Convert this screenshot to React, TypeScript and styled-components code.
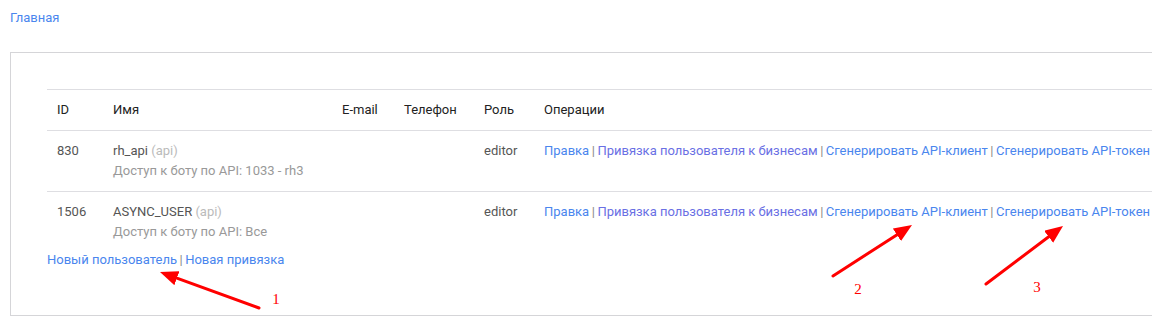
import React from "react";
import styled, { createGlobalStyle } from "styled-components";

const GlobalStyle = createGlobalStyle`
  html, body {
    margin: 0;
    padding: 0;
    overflow: hidden;
    background: #fff;
  }
  body {
    font-family: Roboto, "Liberation Sans", Arial, sans-serif;
    font-size: 13px;
    line-height: 20px;
    color: #333;
  }
`;

const Page = styled.div`
  position: relative;
  padding: 8px 0 0 10px;
  width: 1200px;
  height: 318px;
  box-sizing: border-box;
`;

const Link = styled.a<{ $visited?: boolean }>`
  color: ${(p) => (p.$visited ? "#6a70e4" : "#4a86ee")};
  text-decoration: none;
  cursor: pointer;
`;

const Breadcrumbs = styled.div`
  height: 20px;
  margin-bottom: 24px;
`;

const Panel = styled.div`
  border: 1px solid #d5d5d8;
  padding: 36px 0 45px 36px;
  width: 1180px;
`;

const Table = styled.table`
  border-collapse: collapse;
  width: 1150px;
  border-top: 1px solid #dedee2;
`;

const Th = styled.th<{ $w?: number }>`
  text-align: left;
  font-weight: 400;
  color: #222;
  padding: 10px 10px 10px;
  width: ${(p) => (p.$w ? `${p.$w - 20}px` : "auto")};
  white-space: nowrap;
`;

const Row = styled.tr`
  border-top: 1px solid #dedee2;
`;

const Td = styled.td`
  vertical-align: top;
  padding: 10px 10px 10px;
  color: #555;
  white-space: nowrap;
`;

const Muted = styled.span`
  color: #bbb;
`;

const Note = styled.div`
  color: #999;
`;

const Sep = styled.span`
  color: #888;
  margin: 0 2.5px;
`;

const Footer = styled.div`
  height: 20px;
  margin-top: -2px;
`;

const Overlay = styled.svg`
  position: absolute;
  left: 0;
  top: 0;
  pointer-events: none;
`;

type User = { id: number; name: string; access: string };

const users: User[] = [
  { id: 830, name: "rh_api", access: "1033 - rh3" },
  { id: 1506, name: "ASYNC_USER", access: "Все" },
];

const Operations = () => (
  <>
    <Link>Правка</Link>
    <Sep>|</Sep>
    <Link $visited>Привязка пользователя к бизнесам</Link>
    <Sep>|</Sep>
    <Link>Сгенерировать API-клиент</Link>
    <Sep>|</Sep>
    <Link>Сгенерировать API-токен</Link>
  </>
);

const arrows = [
  { x1: 259, y1: 308, x2: 160, y2: 272, label: "1", lx: 276, ly: 304 },
  { x1: 833, y1: 276, x2: 912, y2: 225, label: "2", lx: 858, ly: 294 },
  { x1: 986, y1: 284, x2: 1063, y2: 226, label: "3", lx: 1037, ly: 292 },
];

const Arrows = () => (
  <Overlay width={1152} height={318}>
    <defs>
      <marker
        id="head"
        markerWidth="6"
        markerHeight="5"
        refX="1"
        refY="2.5"
        orient="auto"
        markerUnits="strokeWidth"
      >
        <path d="M0,0 L6,2.5 L0,5 Z" fill="#f00" />
      </marker>
    </defs>
    {arrows.map((a) => {
      const dx = a.x2 - a.x1;
      const dy = a.y2 - a.y1;
      const len = Math.sqrt(dx * dx + dy * dy);
      const ex = a.x2 - (dx / len) * 15;
      const ey = a.y2 - (dy / len) * 15;
      return (
        <g key={a.label}>
          <line
            x1={a.x1}
            y1={a.y1}
            x2={ex}
            y2={ey}
            stroke="#f00"
            strokeWidth={3}
            strokeLinecap="round"
            markerEnd="url(#head)"
          />
          <text
            x={a.lx}
            y={a.ly}
            fill="#f00"
            fontSize={15}
            fontFamily='"Liberation Serif", serif'
            textAnchor="middle"
          >
            {a.label}
          </text>
        </g>
      );
    })}
  </Overlay>
);

const App = () => (
  <Page>
    <GlobalStyle />
    <Breadcrumbs>
      <Link>Главная</Link>
    </Breadcrumbs>
    <Panel>
      <Table>
        <thead>
          <tr>
            <Th $w={56}>ID</Th>
            <Th $w={229}>Имя</Th>
            <Th $w={62}>E-mail</Th>
            <Th $w={80}>Телефон</Th>
            <Th $w={60}>Роль</Th>
            <Th>Операции</Th>
          </tr>
        </thead>
        <tbody>
          {users.map((u) => (
            <Row key={u.id}>
              <Td>{u.id}</Td>
              <Td>
                {u.name} <Muted>(api)</Muted>
                <Note>Доступ к боту по API: {u.access}</Note>
              </Td>
              <Td />
              <Td />
              <Td>editor</Td>
              <Td>
                <Operations />
              </Td>
            </Row>
          ))}
        </tbody>
      </Table>
      <Footer>
        <Link>Новый пользователь</Link>
        <Sep>|</Sep>
        <Link>Новая привязка</Link>
      </Footer>
    </Panel>
    <Arrows />
  </Page>
);

export default App;
